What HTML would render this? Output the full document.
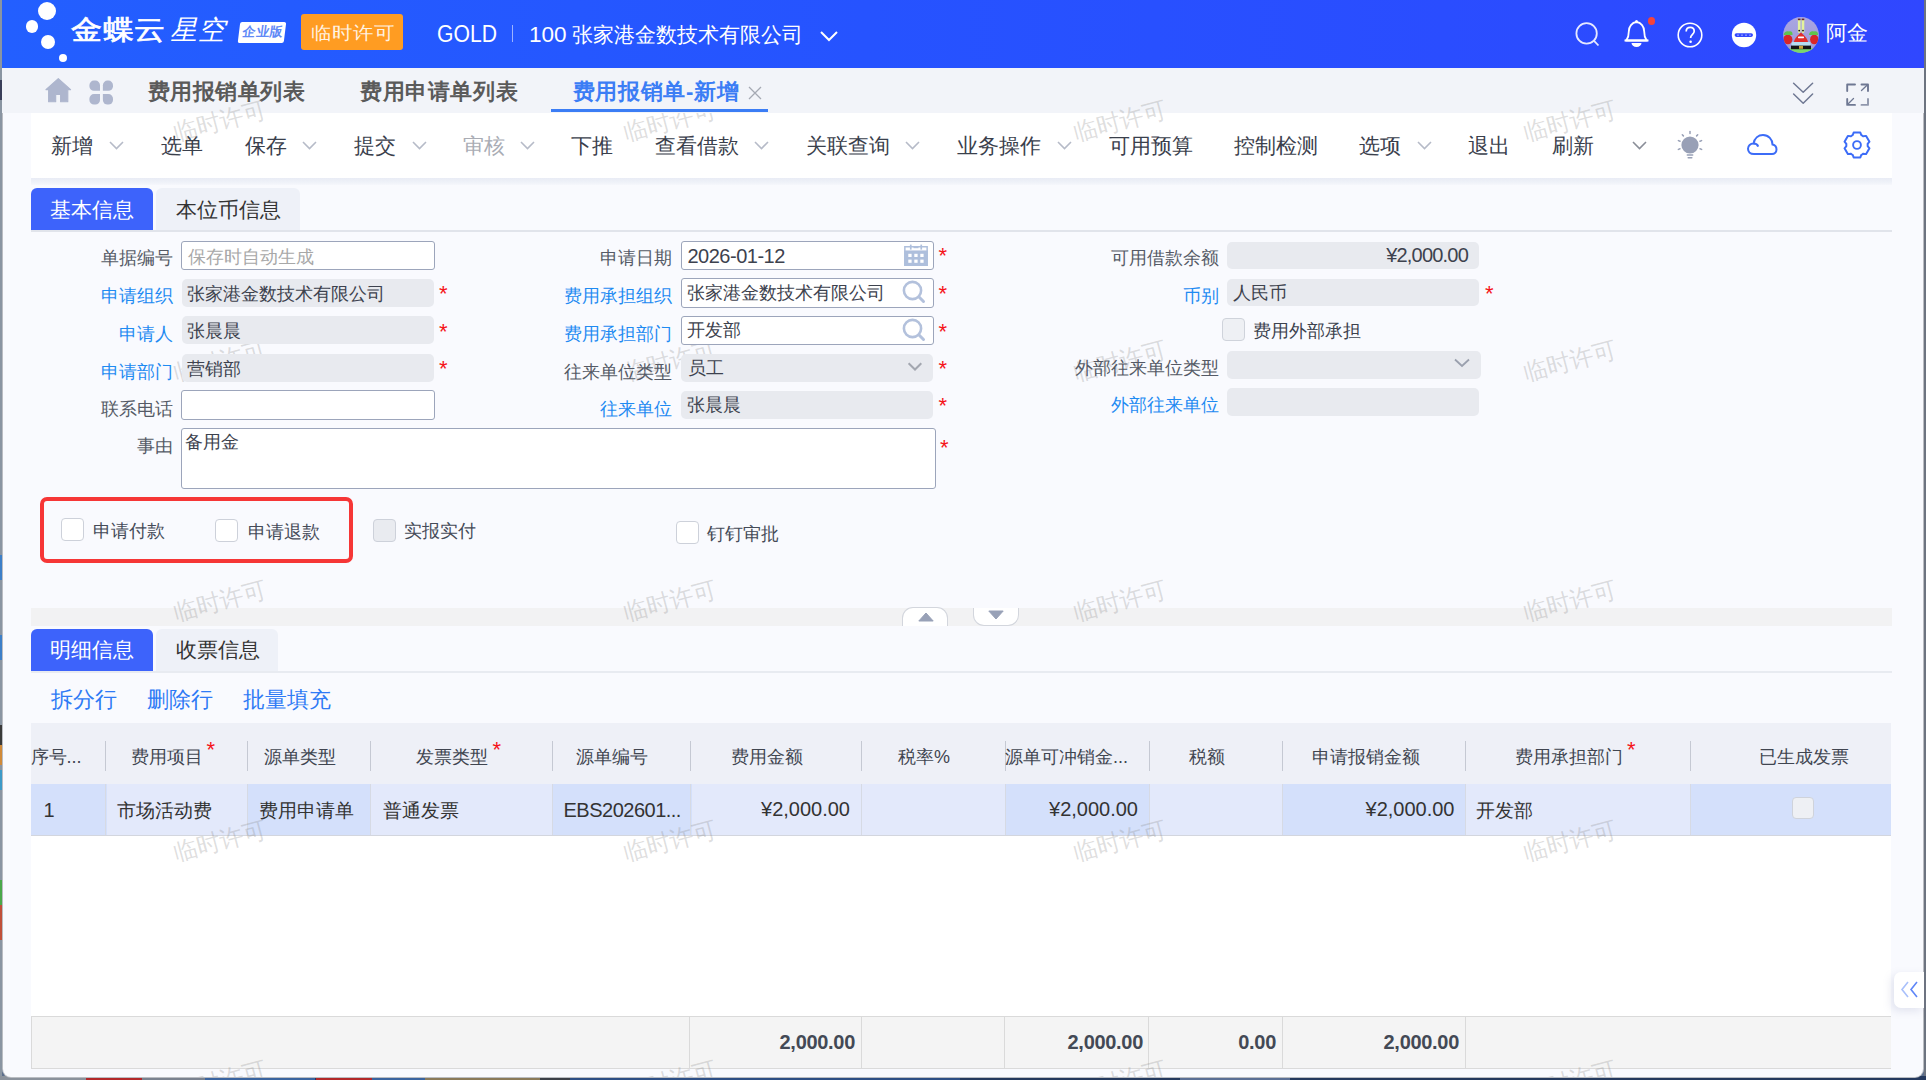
<!DOCTYPE html>
<html><head><meta charset="utf-8"><title>费用报销单-新增</title>
<style>
html,body{margin:0;padding:0;}
body{width:1926px;height:1080px;overflow:hidden;position:relative;background:#5b6e8c;font-family:"Liberation Sans", sans-serif;}
.t{position:absolute;white-space:nowrap;}
.r{position:absolute;box-sizing:border-box;}
</style></head><body>

<div class="r" style="left:0.0px;top:0.0px;width:2.0px;height:1080.0px;background:#8a95a2;"></div>
<div class="r" style="left:0.0px;top:80.0px;width:2.0px;height:20.0px;background:#3a3f5a;"></div>
<div class="r" style="left:0.0px;top:555.0px;width:2.0px;height:25.0px;background:#3d7fc8;"></div>
<div class="r" style="left:0.0px;top:635.0px;width:2.0px;height:25.0px;background:#3d7fc8;"></div>
<div class="r" style="left:0.0px;top:725.0px;width:2.0px;height:20.0px;background:#3a3a3a;"></div>
<div class="r" style="left:0.0px;top:745.0px;width:2.0px;height:20.0px;background:#d08a3a;"></div>
<div class="r" style="left:0.0px;top:770.0px;width:2.0px;height:20.0px;background:#3d9ac8;"></div>
<div class="r" style="left:0.0px;top:880.0px;width:2.0px;height:25.0px;background:#4aa84a;"></div>
<div class="r" style="left:0.0px;top:905.0px;width:2.0px;height:35.0px;background:#c0503a;"></div>
<div class="r" style="left:1924.0px;top:0.0px;width:2.0px;height:1080.0px;background:#6d7480;"></div>
<div class="r" style="left:0.0px;top:1076.0px;width:1926.0px;height:4.0px;background:#24395e;"></div>
<div class="r" style="left:0.0px;top:1076.0px;width:86.0px;height:4.0px;background:#8b929c;"></div>
<div class="r" style="left:86.0px;top:1076.0px;width:56.0px;height:4.0px;background:#b3282b;"></div>
<div class="r" style="left:142.0px;top:1076.0px;width:63.0px;height:4.0px;background:#7a8290;"></div>
<div class="r" style="left:205.0px;top:1076.0px;width:110.0px;height:4.0px;background:#3a64a0;"></div>
<div class="r" style="left:316.0px;top:1076.0px;width:56.0px;height:4.0px;background:#b3282b;"></div>
<div class="r" style="left:372.0px;top:1076.0px;width:53.0px;height:4.0px;background:#3a64a0;"></div>
<div class="r" style="left:425.0px;top:1076.0px;width:115.0px;height:4.0px;background:#8a7a5a;"></div>
<div class="r" style="left:540.0px;top:1076.0px;width:30.0px;height:4.0px;background:#3b3f48;"></div>
<div class="r" style="left:570.0px;top:1076.0px;width:390.0px;height:4.0px;background:#2d4f86;"></div>
<div class="r" style="left:1180.0px;top:1076.0px;width:110.0px;height:4.0px;background:#5a6f96;"></div>
<div class="r" style="left:2.0px;top:0.0px;width:1922.0px;height:1078.0px;background:#f9fafe;border-radius:0 0 9px 9px;border:1px solid rgba(70,75,85,0.35);border-top:none;"></div>
<div class="r" style="left:2.0px;top:0.0px;width:1922.0px;height:68.0px;background:linear-gradient(90deg,#235fff 0%,#2653ff 45%,#2a4dff 75%,#3047ff 100%);"></div>
<div class="r" style="left:38.1px;top:1.7px;width:18.4px;height:18.4px;background:#fff;border-radius:50%;"></div>
<div class="r" style="left:25.9px;top:20.4px;width:12.2px;height:12.2px;background:#fff;border-radius:50%;"></div>
<div class="r" style="left:40.6px;top:35.2px;width:14.0px;height:14.0px;background:#fff;border-radius:50%;"></div>
<div class="r" style="left:59.1px;top:53.7px;width:8.2px;height:8.2px;background:#fff;border-radius:50%;"></div>
<div class="t" style="left:70.5px;top:17.0px;font-size:27px;line-height:27px;color:#fff;font-weight:normal;letter-spacing:0.5px;transform:scaleX(1.15);transform-origin:0 0;-webkit-text-stroke:0.7px #fff;">金蝶云</div>
<div class="t" style="left:170.0px;top:17.0px;font-size:27px;line-height:27px;color:#fff;font-weight:normal;font-style:italic;letter-spacing:1px;">星空</div>
<div class="r" style="left:238.5px;top:21.5px;width:46px;height:20.5px;background:#fff;transform:skewX(-7deg);border-radius:2px;"></div>
<div class="t" style="left:241.5px;top:25.3px;font-size:13px;line-height:13px;color:#5f89f6;font-weight:bold;transform:skewX(-8deg);transform-origin:0 100%;letter-spacing:0.3px;">企业版</div>
<div class="r" style="left:301.0px;top:14.0px;width:102.0px;height:36.0px;background:#ff9c22;border-radius:3px;"></div>
<div class="t" style="left:310.5px;top:23.5px;font-size:20.5px;line-height:20.5px;color:rgba(255,255,255,0.88);font-weight:normal;transform:scaleY(0.88);transform-origin:0 0;">临时许可</div>
<div class="t" style="left:437.0px;top:23.0px;font-size:23.5px;line-height:23.5px;color:#fff;font-weight:normal;transform:scaleX(0.9);transform-origin:0 0;">GOLD</div>
<div class="r" style="left:512.0px;top:25.0px;width:1.3px;height:17.0px;background:rgba(255,255,255,0.55);"></div>
<div class="t" style="left:529.0px;top:23.5px;font-size:21px;line-height:21px;color:#fff;font-weight:normal;"><span style="font-size:22.5px">100</span> 张家港金数技术有限公司</div>
<svg class="r" style="left:819px;top:29px" width="20" height="14" viewBox="0 0 20 14"><polyline points="2,3 10,11 18,3" fill="none" stroke="#fff" stroke-width="2"/></svg>
<svg class="r" style="left:1572px;top:20px" width="30" height="30" viewBox="0 0 30 30"><circle cx="14.6" cy="13.4" r="10.2" fill="none" stroke="#e6e9ff" stroke-width="1.8"/><line x1="21.8" y1="20.6" x2="26.5" y2="25.5" stroke="#e6e9ff" stroke-width="1.8"/></svg>
<svg class="r" style="left:1622px;top:18px" width="30" height="32" viewBox="0 0 30 32"><path d="M4,22.5 L4.5,22 C6,20 6.8,18 6.8,13.5 C6.8,8.5 10,4.5 14.5,4 C19,4.5 22.2,8.5 22.2,13.5 C22.2,18 23,20 24.5,22 L25,22.5 Z" fill="none" stroke="#fff" stroke-width="1.8" stroke-linejoin="round"/><line x1="2.5" y1="22.5" x2="26.5" y2="22.5" stroke="#fff" stroke-width="2"/><path d="M9.5,25 A5,4 0 0 0 19.5,25 Z" fill="#fff"/><circle cx="14.5" cy="3.5" r="1.5" fill="#fff"/></svg>
<div class="r" style="left:1647.7px;top:17.3px;width:7.4px;height:7.4px;background:#f5433c;border-radius:50%;"></div>
<svg class="r" style="left:1676px;top:21px" width="28" height="28" viewBox="0 0 28 28"><circle cx="14" cy="14" r="11.8" fill="none" stroke="#fff" stroke-width="1.6"/><path d="M10.2,10.6 C10.2,8 12,6.4 14.2,6.4 C16.6,6.4 18.2,8 18.2,10.2 C18.2,13.2 14.6,13.6 14.6,17" fill="none" stroke="#fff" stroke-width="1.7"/><circle cx="14.6" cy="20.8" r="1.3" fill="#fff"/></svg>
<svg class="r" style="left:1730px;top:21px" width="28" height="28" viewBox="0 0 28 28"><circle cx="14" cy="14" r="12.2" fill="#fff"/><rect x="4.6" y="12.3" width="18.4" height="3.6" rx="1.8" fill="#3348ff"/><circle cx="8" cy="14.1" r="0.7" fill="#fff"/><circle cx="12" cy="14.1" r="0.7" fill="#fff"/><circle cx="16" cy="14.1" r="0.7" fill="#fff"/><circle cx="20" cy="14.1" r="0.7" fill="#fff"/></svg>
<svg class="r" style="left:1783px;top:17px" width="36" height="36" viewBox="0 0 36 36"><defs><clipPath id="av"><circle cx="18" cy="18" r="17.9"/></clipPath><linearGradient id="avg" x1="0" y1="0" x2="0" y2="1"><stop offset="0" stop-color="#a9a6e2"/><stop offset="1" stop-color="#9d98d8"/></linearGradient></defs>
<g clip-path="url(#av)"><rect width="36" height="36" fill="url(#avg)"/>
<rect x="0" y="31" width="36" height="6" fill="#79d66a"/>
<rect x="8.5" y="25" width="19" height="4" rx="1" fill="#b4ddf2"/>
<rect x="8" y="28.6" width="20" height="3.6" fill="#151515"/><rect x="16" y="28.8" width="4" height="3" fill="#c9a23a"/>
<path d="M18,15.5 C20,17.5 24.5,21 25,25 L11,25 C11.5,21 16,17.5 18,15.5 Z" fill="#e12d2a"/>
<rect x="14.9" y="2" width="2.6" height="14" rx="1.2" fill="#e4f39c"/><rect x="18.7" y="2" width="2.6" height="14" rx="1.2" fill="#e4f39c"/>
<rect x="14.9" y="1.6" width="2.6" height="1.6" fill="#6a2a2a"/><rect x="18.7" y="1.6" width="2.6" height="1.6" fill="#6a2a2a"/>
<circle cx="16.2" cy="13.6" r="0.9" fill="#111"/><circle cx="20" cy="13.6" r="0.9" fill="#111"/>
<ellipse cx="4.8" cy="22.5" rx="4.6" ry="4.8" fill="#d8262a"/><ellipse cx="31.3" cy="22.5" rx="4.2" ry="4.8" fill="#d8262a"/>
<path d="M0.5,18 C1,14.5 4,13.5 6,14.5 C8,13.5 10,15 9.5,18 Z" fill="#5fc44f"/><path d="M26,18 C26,14.5 29,13.5 31,14.5 C33,13.5 35.5,15 35,18 Z" fill="#5fc44f"/>
<rect x="15" y="19.6" width="6" height="1.6" rx="0.6" fill="#fff"/></g></svg>
<div class="t" style="left:1825.5px;top:22.5px;font-size:20.5px;line-height:20.5px;color:#fff;font-weight:normal;">阿金</div>
<div class="r" style="left:2.0px;top:68.0px;width:1922.0px;height:44.5px;background:#f2f4f9;"></div>
<svg class="r" style="left:40px;top:74px" width="80" height="34" viewBox="0 0 80 34"><path d="M18.3,4.6 L30.6,15.6 L27.8,15.6 L27.8,27.8 L20.6,27.8 L20.6,20.5 L15.7,20.5 L15.7,27.8 L8.6,27.8 L8.6,15.6 L5.9,15.6 Z" fill="#aeb6ce" stroke="#aeb6ce" stroke-width="1.1" stroke-linejoin="round"/><path d="M49.4,11.2 A4.6,4.6 0 0 1 54.0,6.6 H55.4 A4.6,4.6 0 0 1 60,11.2 V16.8 H54.0 A4.6,4.6 0 0 1 49.4,12.200000000000001 Z" fill="#aeb6ce"/><path d="M62.9,11.2 A4.6,4.6 0 0 1 67.5,6.6 H68.4 A4.6,4.6 0 0 1 73,11.2 V12.200000000000001 A4.6,4.6 0 0 1 68.4,16.8 H62.9 Z" fill="#aeb6ce"/><path d="M49.4,24.700000000000003 A4.6,4.6 0 0 1 54.0,20.1 H60 V25.9 A4.6,4.6 0 0 1 55.4,30.5 H54.0 A4.6,4.6 0 0 1 49.4,25.9 Z" fill="#aeb6ce"/><path d="M62.9,20.1 H68.4 A4.6,4.6 0 0 1 73,24.700000000000003 V25.9 A4.6,4.6 0 0 1 68.4,30.5 H67.5 A4.6,4.6 0 0 1 62.9,25.9 Z" fill="#aeb6ce"/></svg>
<div class="t" style="left:147.5px;top:81.0px;font-size:22px;line-height:22px;color:#5a5a5a;font-weight:bold;letter-spacing:0.6px;">费用报销单列表</div>
<div class="t" style="left:360.0px;top:81.0px;font-size:22px;line-height:22px;color:#5a5a5a;font-weight:bold;letter-spacing:0.6px;">费用申请单列表</div>
<svg class="r" style="left:1785px;top:75px" width="95" height="37" viewBox="0 0 95 37"><g fill="none" stroke="#6f7893" stroke-width="1.5" stroke-linecap="round" stroke-linejoin="round"><polyline points="8.6,8.3 18.2,17.2 27.6,8.3"/><polyline points="8.6,19 18.2,28.3 27.6,19"/></g><g fill="none" stroke="#6f7893" stroke-width="1.9" stroke-linejoin="round" stroke-linecap="round"><polyline points="62.2,16 62.2,9.5 70,9.5"/><polyline points="76.5,9.5 83,9.5 83,16"/><polyline points="62.2,24 62.2,29.9 70,29.9"/><polyline points="76.5,29.9 83,29.9 83,24" stroke-opacity="0.75"/></g><g stroke="#6f7893" stroke-width="1.3" stroke-linecap="round"><line x1="76.5" y1="15.5" x2="82" y2="10.3"/><line x1="68.5" y1="23.5" x2="63" y2="29"/></g></svg>
<div class="r" style="left:31.0px;top:177.0px;width:1860.5px;height:8.0px;background:linear-gradient(#e7eaf4,#eef1f8 60%,#f6f7fc);"></div>
<div class="r" style="left:31.0px;top:112.5px;width:1860.5px;height:65.0px;background:#fff;"></div>
<div class="t" style="left:51.0px;top:134.5px;font-size:21px;line-height:21px;color:#3a404c;font-weight:normal;">新增</div>
<svg class="r" style="left:108px;top:139px" width="17" height="13" viewBox="0 0 17 13"><polyline points="2,3 8.5,9.5 15,3" fill="none" stroke="#b6bbc8" stroke-width="1.6"/></svg>
<div class="t" style="left:160.5px;top:134.5px;font-size:21px;line-height:21px;color:#3a404c;font-weight:normal;">选单</div>
<div class="t" style="left:244.5px;top:134.5px;font-size:21px;line-height:21px;color:#3a404c;font-weight:normal;">保存</div>
<svg class="r" style="left:301px;top:139px" width="17" height="13" viewBox="0 0 17 13"><polyline points="2,3 8.5,9.5 15,3" fill="none" stroke="#b6bbc8" stroke-width="1.6"/></svg>
<div class="t" style="left:353.5px;top:134.5px;font-size:21px;line-height:21px;color:#3a404c;font-weight:normal;">提交</div>
<svg class="r" style="left:411px;top:139px" width="17" height="13" viewBox="0 0 17 13"><polyline points="2,3 8.5,9.5 15,3" fill="none" stroke="#b6bbc8" stroke-width="1.6"/></svg>
<div class="t" style="left:462.5px;top:134.5px;font-size:21px;line-height:21px;color:#a9acb4;font-weight:normal;">审核</div>
<svg class="r" style="left:519px;top:139px" width="17" height="13" viewBox="0 0 17 13"><polyline points="2,3 8.5,9.5 15,3" fill="none" stroke="#b6bbc8" stroke-width="1.6"/></svg>
<div class="t" style="left:571.1px;top:134.5px;font-size:21px;line-height:21px;color:#3a404c;font-weight:normal;">下推</div>
<div class="t" style="left:654.5px;top:134.5px;font-size:21px;line-height:21px;color:#3a404c;font-weight:normal;">查看借款</div>
<svg class="r" style="left:753px;top:139px" width="17" height="13" viewBox="0 0 17 13"><polyline points="2,3 8.5,9.5 15,3" fill="none" stroke="#b6bbc8" stroke-width="1.6"/></svg>
<div class="t" style="left:806.3px;top:134.5px;font-size:21px;line-height:21px;color:#3a404c;font-weight:normal;">关联查询</div>
<svg class="r" style="left:904px;top:139px" width="17" height="13" viewBox="0 0 17 13"><polyline points="2,3 8.5,9.5 15,3" fill="none" stroke="#b6bbc8" stroke-width="1.6"/></svg>
<div class="t" style="left:956.5px;top:134.5px;font-size:21px;line-height:21px;color:#3a404c;font-weight:normal;">业务操作</div>
<svg class="r" style="left:1056px;top:139px" width="17" height="13" viewBox="0 0 17 13"><polyline points="2,3 8.5,9.5 15,3" fill="none" stroke="#b6bbc8" stroke-width="1.6"/></svg>
<div class="t" style="left:1108.5px;top:134.5px;font-size:21px;line-height:21px;color:#3a404c;font-weight:normal;">可用预算</div>
<div class="t" style="left:1233.5px;top:134.5px;font-size:21px;line-height:21px;color:#3a404c;font-weight:normal;">控制检测</div>
<div class="t" style="left:1359.1px;top:134.5px;font-size:21px;line-height:21px;color:#3a404c;font-weight:normal;">选项</div>
<svg class="r" style="left:1416px;top:139px" width="17" height="13" viewBox="0 0 17 13"><polyline points="2,3 8.5,9.5 15,3" fill="none" stroke="#b6bbc8" stroke-width="1.6"/></svg>
<div class="t" style="left:1468.0px;top:134.5px;font-size:21px;line-height:21px;color:#3a404c;font-weight:normal;">退出</div>
<div class="t" style="left:1551.5px;top:134.5px;font-size:21px;line-height:21px;color:#3a404c;font-weight:normal;">刷新</div>
<svg class="r" style="left:1631px;top:139px" width="17" height="13" viewBox="0 0 17 13"><polyline points="2,3 8.5,9.5 15,3" fill="none" stroke="#8a8e98" stroke-width="1.6"/></svg>
<svg class="r" style="left:1675px;top:128px" width="32" height="33" viewBox="0 0 32 33"><circle cx="15" cy="17" r="8.6" fill="#98a0b6"/><g stroke="#98a0b6" stroke-width="1.5" stroke-linecap="round"><line x1="15" y1="3.6" x2="15" y2="5.4"/><line x1="7.3" y1="6.8" x2="8.4" y2="7.9"/><line x1="22.7" y1="6.8" x2="21.6" y2="7.9"/><line x1="3.4" y1="12.6" x2="5" y2="13.2"/><line x1="26.6" y1="12.6" x2="25" y2="13.2"/><line x1="3.4" y1="21.4" x2="5" y2="20.8"/><line x1="26.6" y1="21.4" x2="25" y2="20.8"/><line x1="12.3" y1="27" x2="17.7" y2="27"/><line x1="13.2" y1="29.8" x2="16.8" y2="29.8"/></g></svg>
<svg class="r" style="left:1745px;top:131px" width="34" height="27" viewBox="0 0 34 27"><path d="M9,23 C5,23 3,20.5 3,17.8 C3,14.8 5.5,12.5 8.5,12.6 C9.5,7 13.5,4 18,4 C23.5,4 27.5,8.5 27.5,13.5 C30,14 31.5,16.3 31.5,18.6 C31.5,21 29.5,23 27,23 Z" fill="none" stroke="#3c6cf7" stroke-width="2"/><path d="M8.5,12.6 C11,12.6 12.7,14 13.2,15.6" fill="none" stroke="#3c6cf7" stroke-width="2"/></svg>
<svg class="r" style="left:1842px;top:130px" width="30" height="30" viewBox="0 0 30 30"><polygon points="9.65,5.73 10.65,5.23 11.66,2.54 18.34,2.54 19.35,5.23 20.35,5.73 21.29,6.34 24.12,5.88 27.46,11.66 25.64,13.88 25.70,15.00 25.64,16.12 27.46,18.34 24.12,24.12 21.29,23.66 20.35,24.27 19.35,24.77 18.34,27.46 11.66,27.46 10.65,24.77 9.65,24.27 8.71,23.66 5.88,24.12 2.54,18.34 4.36,16.12 4.30,15.00 4.36,13.88 2.54,11.66 5.88,5.88 8.71,6.34" fill="none" stroke="#3c6cf7" stroke-width="2" stroke-linejoin="round"/><circle cx="15" cy="15" r="3.9" fill="none" stroke="#3c6cf7" stroke-width="1.9"/></svg>
<div class="r" style="left:31.0px;top:188.0px;width:122.0px;height:42.5px;background:#3d63fb;border-radius:6px 6px 0 0;"></div>
<div class="t" style="left:50.0px;top:199.0px;font-size:21px;line-height:21px;color:#fff;font-weight:normal;">基本信息</div>
<div class="r" style="left:156.0px;top:188.0px;width:144.0px;height:42.5px;background:#eef1f8;border-radius:6px 6px 0 0;"></div>
<div class="t" style="left:176.0px;top:199.0px;font-size:21px;line-height:21px;color:#333;font-weight:normal;">本位币信息</div>
<div class="r" style="left:31.0px;top:230.0px;width:1860.5px;height:1.5px;background:#e1e4eb;"></div>
<div class="r" style="left:31.0px;top:608.0px;width:1860.5px;height:17.5px;background:#f2f2f3;"></div>
<div class="r" style="left:902.4px;top:607.0px;width:46.1px;height:19.0px;background:#fff;border:1px solid #d3d6dd;border-bottom:none;border-radius:11px 11px 0 0;"></div>
<svg class="r" style="left:917px;top:611px" width="18" height="12" viewBox="0 0 18 12"><path d="M1.8,10 L9,2 L16.2,10 Z" fill="#98a1b7" stroke="#98a1b7" stroke-width="1" stroke-linejoin="round"/></svg>
<div class="r" style="left:973.4px;top:607.5px;width:45.3px;height:18.0px;background:#fff;border:1px solid #d3d6dd;border-top:none;border-radius:0 0 11px 11px;"></div>
<svg class="r" style="left:987px;top:609px" width="18" height="12" viewBox="0 0 18 12"><path d="M1.8,2 L9,10 L16.2,2 Z" fill="#98a1b7" stroke="#98a1b7" stroke-width="1" stroke-linejoin="round"/></svg>
<div class="r" style="left:31.0px;top:628.7px;width:122.0px;height:42.8px;background:#3d63fb;border-radius:6px 6px 0 0;"></div>
<div class="t" style="left:50.0px;top:639.0px;font-size:21px;line-height:21px;color:#fff;font-weight:normal;">明细信息</div>
<div class="r" style="left:156.0px;top:628.7px;width:122.0px;height:42.8px;background:#eef1f8;border-radius:6px 6px 0 0;"></div>
<div class="t" style="left:175.7px;top:639.0px;font-size:21px;line-height:21px;color:#333;font-weight:normal;">收票信息</div>
<div class="r" style="left:31.0px;top:671.0px;width:1860.5px;height:1.5px;background:#e8ebf1;"></div>
<div class="t" style="left:51.0px;top:688.5px;font-size:22.2px;line-height:22.2px;color:#2f7bf5;font-weight:normal;">拆分行</div>
<div class="t" style="left:146.6px;top:688.5px;font-size:22.2px;line-height:22.2px;color:#2f7bf5;font-weight:normal;">删除行</div>
<div class="t" style="left:243.0px;top:688.5px;font-size:22.2px;line-height:22.2px;color:#2f7bf5;font-weight:normal;">批量填充</div>
<div class="r" style="left:31.0px;top:723.0px;width:1860.0px;height:61.0px;background:#eef0f7;"></div>
<div class="r" style="left:31.0px;top:784.0px;width:1860.0px;height:232.5px;background:#fff;"></div>
<div class="r" style="left:31.0px;top:784.0px;width:75.5px;height:51.5px;background:#d4e0fb;"></div>
<div class="r" style="left:106.5px;top:784.0px;width:141.5px;height:51.5px;background:#e3e9fb;"></div>
<div class="r" style="left:248.0px;top:784.0px;width:123.3px;height:51.5px;background:#d4e0fb;"></div>
<div class="r" style="left:371.3px;top:784.0px;width:181.7px;height:51.5px;background:#e3e9fb;"></div>
<div class="r" style="left:553.0px;top:784.0px;width:138.5px;height:51.5px;background:#d4e0fb;"></div>
<div class="r" style="left:691.5px;top:784.0px;width:170.8px;height:51.5px;background:#e3e9fb;"></div>
<div class="r" style="left:862.3px;top:784.0px;width:143.9px;height:51.5px;background:#e3e9fb;"></div>
<div class="r" style="left:1006.2px;top:784.0px;width:144.2px;height:51.5px;background:#d4e0fb;"></div>
<div class="r" style="left:1150.4px;top:784.0px;width:132.6px;height:51.5px;background:#e3e9fb;"></div>
<div class="r" style="left:1283.0px;top:784.0px;width:183.2px;height:51.5px;background:#d4e0fb;"></div>
<div class="r" style="left:1466.2px;top:784.0px;width:224.8px;height:51.5px;background:#e3e9fb;"></div>
<div class="r" style="left:1691.0px;top:784.0px;width:200.0px;height:51.5px;background:#d4e0fb;"></div>
<div class="r" style="left:31.0px;top:835.0px;width:1860.0px;height:1.2px;background:#d3d6de;"></div>
<div class="r" style="left:105.0px;top:784.0px;width:1.1px;height:51.0px;background:#d6dae4;"></div>
<div class="r" style="left:246.5px;top:784.0px;width:1.1px;height:51.0px;background:#d6dae4;"></div>
<div class="r" style="left:369.8px;top:784.0px;width:1.1px;height:51.0px;background:#d6dae4;"></div>
<div class="r" style="left:551.5px;top:784.0px;width:1.1px;height:51.0px;background:#d6dae4;"></div>
<div class="r" style="left:690.0px;top:784.0px;width:1.1px;height:51.0px;background:#d6dae4;"></div>
<div class="r" style="left:860.8px;top:784.0px;width:1.1px;height:51.0px;background:#d6dae4;"></div>
<div class="r" style="left:1004.7px;top:784.0px;width:1.1px;height:51.0px;background:#d6dae4;"></div>
<div class="r" style="left:1148.9px;top:784.0px;width:1.1px;height:51.0px;background:#d6dae4;"></div>
<div class="r" style="left:1281.5px;top:784.0px;width:1.1px;height:51.0px;background:#d6dae4;"></div>
<div class="r" style="left:1464.7px;top:784.0px;width:1.1px;height:51.0px;background:#d6dae4;"></div>
<div class="r" style="left:1689.5px;top:784.0px;width:1.1px;height:51.0px;background:#d6dae4;"></div>
<div class="r" style="left:105.0px;top:741.0px;width:1.3px;height:29.5px;background:#c5c9d3;"></div>
<div class="r" style="left:246.5px;top:741.0px;width:1.3px;height:29.5px;background:#c5c9d3;"></div>
<div class="r" style="left:369.8px;top:741.0px;width:1.3px;height:29.5px;background:#c5c9d3;"></div>
<div class="r" style="left:551.5px;top:741.0px;width:1.3px;height:29.5px;background:#c5c9d3;"></div>
<div class="r" style="left:690.0px;top:741.0px;width:1.3px;height:29.5px;background:#c5c9d3;"></div>
<div class="r" style="left:860.8px;top:741.0px;width:1.3px;height:29.5px;background:#c5c9d3;"></div>
<div class="r" style="left:1004.7px;top:741.0px;width:1.3px;height:29.5px;background:#c5c9d3;"></div>
<div class="r" style="left:1148.9px;top:741.0px;width:1.3px;height:29.5px;background:#c5c9d3;"></div>
<div class="r" style="left:1281.5px;top:741.0px;width:1.3px;height:29.5px;background:#c5c9d3;"></div>
<div class="r" style="left:1464.7px;top:741.0px;width:1.3px;height:29.5px;background:#c5c9d3;"></div>
<div class="r" style="left:1689.5px;top:741.0px;width:1.3px;height:29.5px;background:#c5c9d3;"></div>
<div class="t" style="left:30.5px;top:747.5px;font-size:18px;line-height:18px;color:#404550;font-weight:normal;">序号...</div>
<div class="t" style="left:131.0px;top:747.5px;font-size:18px;line-height:18px;color:#404550;font-weight:normal;">费用项目</div>
<div class="t" style="left:206.5px;top:739.0px;font-size:22px;line-height:22px;color:#f5141a;font-weight:normal;">*</div>
<div class="t" style="left:263.7px;top:747.5px;font-size:18px;line-height:18px;color:#404550;font-weight:normal;">源单类型</div>
<div class="t" style="left:416.0px;top:747.5px;font-size:18px;line-height:18px;color:#404550;font-weight:normal;">发票类型</div>
<div class="t" style="left:492.5px;top:739.0px;font-size:22px;line-height:22px;color:#f5141a;font-weight:normal;">*</div>
<div class="t" style="left:576.0px;top:747.5px;font-size:18px;line-height:18px;color:#404550;font-weight:normal;">源单编号</div>
<div class="t" style="left:730.5px;top:747.5px;font-size:18px;line-height:18px;color:#404550;font-weight:normal;">费用金额</div>
<div class="t" style="left:898.0px;top:747.5px;font-size:18px;line-height:18px;color:#404550;font-weight:normal;">税率%</div>
<div class="t" style="left:1005.0px;top:747.5px;font-size:18px;line-height:18px;color:#404550;font-weight:normal;">源单可冲销金...</div>
<div class="t" style="left:1188.7px;top:747.5px;font-size:18px;line-height:18px;color:#404550;font-weight:normal;">税额</div>
<div class="t" style="left:1312.0px;top:747.5px;font-size:18px;line-height:18px;color:#404550;font-weight:normal;">申请报销金额</div>
<div class="t" style="left:1515.0px;top:747.5px;font-size:18px;line-height:18px;color:#404550;font-weight:normal;">费用承担部门</div>
<div class="t" style="left:1627.0px;top:739.0px;font-size:22px;line-height:22px;color:#f5141a;font-weight:normal;">*</div>
<div class="t" style="left:1759.0px;top:747.5px;font-size:18px;line-height:18px;color:#404550;font-weight:normal;">已生成发票</div>
<div class="t" style="left:43.5px;top:799.5px;font-size:20px;line-height:20px;color:#333;font-weight:normal;">1</div>
<div class="t" style="left:117.0px;top:800.5px;font-size:19.3px;line-height:19.3px;color:#333;font-weight:normal;">市场活动费</div>
<div class="t" style="left:259.0px;top:800.5px;font-size:19.3px;line-height:19.3px;color:#333;font-weight:normal;">费用申请单</div>
<div class="t" style="left:382.6px;top:800.5px;font-size:19.3px;line-height:19.3px;color:#333;font-weight:normal;">普通发票</div>
<div class="t" style="left:563.5px;top:799.5px;font-size:20px;line-height:20px;color:#333;font-weight:normal;letter-spacing:-0.5px;">EBS202601...</div>
<div class="t" style="right:1076.0px;text-align:right;top:798.5px;font-size:20px;line-height:20px;color:#333;font-weight:normal;">¥2,000.00</div>
<div class="t" style="right:788.0px;text-align:right;top:798.5px;font-size:20px;line-height:20px;color:#333;font-weight:normal;">¥2,000.00</div>
<div class="t" style="right:471.5px;text-align:right;top:798.5px;font-size:20px;line-height:20px;color:#333;font-weight:normal;">¥2,000.00</div>
<div class="t" style="left:1476.3px;top:800.5px;font-size:19.3px;line-height:19.3px;color:#333;font-weight:normal;">开发部</div>
<div class="r" style="left:1791.5px;top:796.5px;width:22.5px;height:22.5px;background:#eef0f4;border:1px solid #cfd3db;border-radius:4px;"></div>
<div class="r" style="left:31.0px;top:1016.0px;width:1860.0px;height:53.0px;background:#f4f4f4;border:1.5px solid #dadada;border-right:none;"></div>
<div class="r" style="left:689.0px;top:1016.0px;width:1.3px;height:53.0px;background:#dadada;"></div>
<div class="r" style="left:860.9px;top:1016.0px;width:1.3px;height:53.0px;background:#dadada;"></div>
<div class="r" style="left:1003.5px;top:1016.0px;width:1.3px;height:53.0px;background:#dadada;"></div>
<div class="r" style="left:1148.1px;top:1016.0px;width:1.3px;height:53.0px;background:#dadada;"></div>
<div class="r" style="left:1282.0px;top:1016.0px;width:1.3px;height:53.0px;background:#dadada;"></div>
<div class="r" style="left:1465.0px;top:1016.0px;width:1.3px;height:53.0px;background:#dadada;"></div>
<div class="t" style="right:1071.0px;text-align:right;top:1031.5px;font-size:20px;line-height:20px;color:#434955;font-weight:bold;letter-spacing:-0.3px;">2,000.00</div>
<div class="t" style="right:783.0px;text-align:right;top:1031.5px;font-size:20px;line-height:20px;color:#434955;font-weight:bold;letter-spacing:-0.3px;">2,000.00</div>
<div class="t" style="right:650.0px;text-align:right;top:1031.5px;font-size:20px;line-height:20px;color:#434955;font-weight:bold;letter-spacing:-0.3px;">0.00</div>
<div class="t" style="right:467.0px;text-align:right;top:1031.5px;font-size:20px;line-height:20px;color:#434955;font-weight:bold;letter-spacing:-0.3px;">2,000.00</div>
<div class="r" style="left:1894.0px;top:972.0px;width:30.0px;height:36.0px;background:#fff;border-radius:7px 0 0 7px;box-shadow:-3px 3px 8px rgba(120,130,170,0.18);"></div>
<svg class="r" style="left:1899px;top:980px" width="22" height="20" viewBox="0 0 22 20"><polyline points="9,2 3,9.5 9,17" fill="none" stroke="#a9c0fb" stroke-width="1.6"/><polyline points="18,2 12,9.5 18,17" fill="none" stroke="#5f86f8" stroke-width="1.6"/></svg>
<div class="r" style="left:2px;top:68px;width:1922px;height:1009px;overflow:hidden;">
<div class="t" style="left:169.5px;top:38.5px;font-size:24px;line-height:28px;color:rgba(128,128,128,0.26);transform:rotate(-15deg);">临时许可</div>
<div class="t" style="left:619.5px;top:38.5px;font-size:24px;line-height:28px;color:rgba(128,128,128,0.26);transform:rotate(-15deg);">临时许可</div>
<div class="t" style="left:1069.5px;top:38.5px;font-size:24px;line-height:28px;color:rgba(128,128,128,0.26);transform:rotate(-15deg);">临时许可</div>
<div class="t" style="left:1519.5px;top:38.5px;font-size:24px;line-height:28px;color:rgba(128,128,128,0.26);transform:rotate(-15deg);">临时许可</div>
<div class="t" style="left:169.5px;top:278.5px;font-size:24px;line-height:28px;color:rgba(128,128,128,0.26);transform:rotate(-15deg);">临时许可</div>
<div class="t" style="left:619.5px;top:278.5px;font-size:24px;line-height:28px;color:rgba(128,128,128,0.26);transform:rotate(-15deg);">临时许可</div>
<div class="t" style="left:1069.5px;top:278.5px;font-size:24px;line-height:28px;color:rgba(128,128,128,0.26);transform:rotate(-15deg);">临时许可</div>
<div class="t" style="left:1519.5px;top:278.5px;font-size:24px;line-height:28px;color:rgba(128,128,128,0.26);transform:rotate(-15deg);">临时许可</div>
<div class="t" style="left:169.5px;top:518.5px;font-size:24px;line-height:28px;color:rgba(128,128,128,0.26);transform:rotate(-15deg);">临时许可</div>
<div class="t" style="left:619.5px;top:518.5px;font-size:24px;line-height:28px;color:rgba(128,128,128,0.26);transform:rotate(-15deg);">临时许可</div>
<div class="t" style="left:1069.5px;top:518.5px;font-size:24px;line-height:28px;color:rgba(128,128,128,0.26);transform:rotate(-15deg);">临时许可</div>
<div class="t" style="left:1519.5px;top:518.5px;font-size:24px;line-height:28px;color:rgba(128,128,128,0.26);transform:rotate(-15deg);">临时许可</div>
<div class="t" style="left:169.5px;top:758.5px;font-size:24px;line-height:28px;color:rgba(128,128,128,0.26);transform:rotate(-15deg);">临时许可</div>
<div class="t" style="left:619.5px;top:758.5px;font-size:24px;line-height:28px;color:rgba(128,128,128,0.26);transform:rotate(-15deg);">临时许可</div>
<div class="t" style="left:1069.5px;top:758.5px;font-size:24px;line-height:28px;color:rgba(128,128,128,0.26);transform:rotate(-15deg);">临时许可</div>
<div class="t" style="left:1519.5px;top:758.5px;font-size:24px;line-height:28px;color:rgba(128,128,128,0.26);transform:rotate(-15deg);">临时许可</div>
<div class="t" style="left:169.5px;top:998.5px;font-size:24px;line-height:28px;color:rgba(128,128,128,0.26);transform:rotate(-15deg);">临时许可</div>
<div class="t" style="left:619.5px;top:998.5px;font-size:24px;line-height:28px;color:rgba(128,128,128,0.26);transform:rotate(-15deg);">临时许可</div>
<div class="t" style="left:1069.5px;top:998.5px;font-size:24px;line-height:28px;color:rgba(128,128,128,0.26);transform:rotate(-15deg);">临时许可</div>
<div class="t" style="left:1519.5px;top:998.5px;font-size:24px;line-height:28px;color:rgba(128,128,128,0.26);transform:rotate(-15deg);">临时许可</div>
</div>
<div class="r" style="left:551.0px;top:68.0px;width:217.0px;height:44.5px;background:#f2f4f9;"></div>
<div class="t" style="left:572.5px;top:81.0px;font-size:22px;line-height:22px;color:#3b7df5;font-weight:bold;letter-spacing:0.7px;">费用报销单-新增</div>
<svg class="r" style="left:747px;top:85px" width="16" height="16" viewBox="0 0 16 16"><path d="M2,2 L14,14 M14,2 L2,14" stroke="#a5a9b3" stroke-width="1.3"/></svg>
<div class="r" style="left:551.0px;top:109.0px;width:217.0px;height:3.0px;background:#3b7df5;"></div>
<div class="t" style="right:1753.0px;text-align:right;top:248.5px;font-size:18px;line-height:18px;color:#555a66;font-weight:normal;">单据编号</div>
<div class="r" style="left:181.0px;top:240.5px;width:253.5px;height:29.0px;background:#fff;border:1.5px solid #9ca5bb;border-radius:3px;"></div>
<div class="t" style="left:187.5px;top:248.0px;font-size:18px;line-height:18px;color:#a8a8a8;font-weight:normal;">保存时自动生成</div>
<div class="t" style="right:1753.0px;text-align:right;top:287.0px;font-size:18px;line-height:18px;color:#1f8bf2;font-weight:normal;">申请组织</div>
<div class="r" style="left:182.0px;top:279.0px;width:252.0px;height:28.0px;background:#e8eaef;border-radius:5px;"></div>
<div class="t" style="left:186.5px;top:284.5px;font-size:18px;line-height:18px;color:#3d424e;font-weight:normal;">张家港金数技术有限公司</div>
<div class="t" style="left:439.0px;top:283.0px;font-size:22px;line-height:22px;color:#f5141a;font-weight:normal;">*</div>
<div class="t" style="right:1753.0px;text-align:right;top:324.5px;font-size:18px;line-height:18px;color:#1f8bf2;font-weight:normal;">申请人</div>
<div class="r" style="left:182.0px;top:316.0px;width:252.0px;height:28.0px;background:#e8eaef;border-radius:5px;"></div>
<div class="t" style="left:186.5px;top:321.5px;font-size:18px;line-height:18px;color:#3d424e;font-weight:normal;">张晨晨</div>
<div class="t" style="left:439.0px;top:320.5px;font-size:22px;line-height:22px;color:#f5141a;font-weight:normal;">*</div>
<div class="t" style="right:1753.0px;text-align:right;top:362.5px;font-size:18px;line-height:18px;color:#1f8bf2;font-weight:normal;">申请部门</div>
<div class="r" style="left:182.0px;top:354.0px;width:252.0px;height:28.0px;background:#e8eaef;border-radius:5px;"></div>
<div class="t" style="left:186.5px;top:359.5px;font-size:18px;line-height:18px;color:#3d424e;font-weight:normal;">营销部</div>
<div class="t" style="left:439.0px;top:358.0px;font-size:22px;line-height:22px;color:#f5141a;font-weight:normal;">*</div>
<div class="t" style="right:1753.0px;text-align:right;top:399.5px;font-size:18px;line-height:18px;color:#555a66;font-weight:normal;">联系电话</div>
<div class="r" style="left:181.0px;top:390.0px;width:253.5px;height:29.5px;background:#fff;border:1.5px solid #9ca5bb;border-radius:3px;"></div>
<div class="t" style="right:1753.0px;text-align:right;top:437.0px;font-size:18px;line-height:18px;color:#555a66;font-weight:normal;">事由</div>
<div class="r" style="left:181.0px;top:428.0px;width:754.5px;height:60.5px;background:#fff;border:1.5px solid #9ca5bb;border-radius:3px;"></div>
<div class="t" style="left:184.5px;top:433.0px;font-size:18px;line-height:18px;color:#3d424e;font-weight:normal;">备用金</div>
<div class="t" style="left:940.0px;top:436.5px;font-size:22px;line-height:22px;color:#f5141a;font-weight:normal;">*</div>
<div class="t" style="right:1253.8px;text-align:right;top:248.5px;font-size:18px;line-height:18px;color:#555a66;font-weight:normal;">申请日期</div>
<div class="r" style="left:680.5px;top:240.5px;width:253.2px;height:29.0px;background:#fff;border:1.5px solid #9ca5bb;border-radius:3px;"></div>
<div class="t" style="left:687.5px;top:246.0px;font-size:20px;line-height:20px;color:#3d424e;font-weight:normal;letter-spacing:-0.5px;">2026-01-12</div>
<div class="t" style="left:938.5px;top:245.0px;font-size:22px;line-height:22px;color:#f5141a;font-weight:normal;">*</div>
<svg class="r" style="left:890px;top:238px" width="40" height="30" viewBox="0 0 40 30"><g fill="#aebfdc"><path d="M14.1,8.1 h23.8 v19.8 h-23.8 Z M15.6,9.6 v3.2 h20.8 v-3.2 Z" fill-rule="evenodd"/><rect x="14.1" y="12.6" width="23.8" height="15.3"/><rect x="19.9" y="6.6" width="1.7" height="5"/><rect x="30.4" y="6.6" width="1.7" height="5"/><rect x="23.5" y="8.6" width="5" height="1.6"/></g><g fill="#fff"><rect x="18.3" y="15.8" width="3.3" height="3.2"/><rect x="24.3" y="15.8" width="3.3" height="3.2"/><rect x="30.3" y="15.8" width="3.3" height="3.2"/><rect x="18.3" y="21.6" width="3.3" height="3.2"/><rect x="24.3" y="21.6" width="3.3" height="3.2"/><rect x="30.3" y="21.6" width="3.3" height="3.2"/></g></svg>
<div class="t" style="right:1253.8px;text-align:right;top:287.0px;font-size:18px;line-height:18px;color:#1f8bf2;font-weight:normal;">费用承担组织</div>
<div class="r" style="left:680.5px;top:278.0px;width:253.2px;height:29.5px;background:#fff;border:1.5px solid #9ca5bb;border-radius:3px;"></div>
<div class="t" style="left:686.5px;top:284.0px;font-size:18px;line-height:18px;color:#3d424e;font-weight:normal;">张家港金数技术有限公司</div>
<div class="t" style="left:938.5px;top:283.0px;font-size:22px;line-height:22px;color:#f5141a;font-weight:normal;">*</div>
<svg class="r" style="left:900px;top:279px" width="28" height="26" viewBox="0 0 28 26"><circle cx="12.5" cy="11.5" r="8.6" fill="none" stroke="#b3c1dc" stroke-width="2.6"/><line x1="18.8" y1="17.8" x2="23.5" y2="22.5" stroke="#b3c1dc" stroke-width="3" stroke-linecap="round"/></svg>
<div class="t" style="right:1253.8px;text-align:right;top:324.5px;font-size:18px;line-height:18px;color:#1f8bf2;font-weight:normal;">费用承担部门</div>
<div class="r" style="left:680.5px;top:315.5px;width:253.2px;height:29.0px;background:#fff;border:1.5px solid #9ca5bb;border-radius:3px;"></div>
<div class="t" style="left:686.5px;top:321.0px;font-size:18px;line-height:18px;color:#3d424e;font-weight:normal;">开发部</div>
<div class="t" style="left:938.5px;top:320.5px;font-size:22px;line-height:22px;color:#f5141a;font-weight:normal;">*</div>
<svg class="r" style="left:900px;top:316.5px" width="28" height="26" viewBox="0 0 28 26"><circle cx="12.5" cy="11.5" r="8.6" fill="none" stroke="#b3c1dc" stroke-width="2.6"/><line x1="18.8" y1="17.8" x2="23.5" y2="22.5" stroke="#b3c1dc" stroke-width="3" stroke-linecap="round"/></svg>
<div class="t" style="right:1253.8px;text-align:right;top:362.5px;font-size:18px;line-height:18px;color:#555a66;font-weight:normal;">往来单位类型</div>
<div class="r" style="left:681.0px;top:354.0px;width:251.5px;height:28.0px;background:#e8eaef;border-radius:5px;"></div>
<div class="t" style="left:687.5px;top:359.0px;font-size:18px;line-height:18px;color:#3d424e;font-weight:normal;">员工</div>
<div class="t" style="left:938.5px;top:358.0px;font-size:22px;line-height:22px;color:#f5141a;font-weight:normal;">*</div>
<svg class="r" style="left:906px;top:360px" width="17" height="12" viewBox="0 0 17 12"><polyline points="2.6,3.3 9,9.5 15.3,3.3" fill="none" stroke="#a3a7b0" stroke-width="2"/></svg>
<div class="t" style="right:1253.8px;text-align:right;top:399.5px;font-size:18px;line-height:18px;color:#1f8bf2;font-weight:normal;">往来单位</div>
<div class="r" style="left:681.0px;top:391.0px;width:251.5px;height:27.7px;background:#e8eaef;border-radius:5px;"></div>
<div class="t" style="left:686.5px;top:396.0px;font-size:18px;line-height:18px;color:#3d424e;font-weight:normal;">张晨晨</div>
<div class="t" style="left:938.5px;top:395.0px;font-size:22px;line-height:22px;color:#f5141a;font-weight:normal;">*</div>
<div class="t" style="right:707.5px;text-align:right;top:249.0px;font-size:18px;line-height:18px;color:#555a66;font-weight:normal;">可用借款余额</div>
<div class="r" style="left:1227.0px;top:241.5px;width:251.6px;height:27.5px;background:#e8eaef;border-radius:5px;"></div>
<div class="t" style="right:458.0px;text-align:right;top:245.0px;font-size:20px;line-height:20px;color:#3d424e;font-weight:normal;letter-spacing:-0.8px;">¥2,000.00</div>
<div class="t" style="right:707.5px;text-align:right;top:287.0px;font-size:18px;line-height:18px;color:#1f8bf2;font-weight:normal;">币别</div>
<div class="r" style="left:1227.0px;top:279.0px;width:251.6px;height:27.3px;background:#e8eaef;border-radius:5px;"></div>
<div class="t" style="left:1232.5px;top:284.0px;font-size:18px;line-height:18px;color:#3d424e;font-weight:normal;">人民币</div>
<div class="t" style="left:1485.0px;top:283.0px;font-size:22px;line-height:22px;color:#f5141a;font-weight:normal;">*</div>
<div class="r" style="left:1222.0px;top:318.0px;width:23.0px;height:23.0px;background:#eef0f4;border:1px solid #cfd3db;border-radius:4px;"></div>
<div class="t" style="left:1252.8px;top:321.5px;font-size:18px;line-height:18px;color:#3d424e;font-weight:normal;">费用外部承担</div>
<div class="t" style="right:707.5px;text-align:right;top:358.5px;font-size:18px;line-height:18px;color:#555a66;font-weight:normal;">外部往来单位类型</div>
<div class="r" style="left:1227.0px;top:351.0px;width:253.8px;height:27.6px;background:#e8eaef;border-radius:5px;"></div>
<svg class="r" style="left:1452px;top:356px" width="19" height="14" viewBox="0 0 19 14"><polyline points="3,3.5 10,10 17,3.5" fill="none" stroke="#9aa0ae" stroke-width="1.8"/></svg>
<div class="t" style="right:707.5px;text-align:right;top:396.0px;font-size:18px;line-height:18px;color:#1f8bf2;font-weight:normal;">外部往来单位</div>
<div class="r" style="left:1227.0px;top:388.0px;width:251.6px;height:28.0px;background:#e8eaef;border-radius:5px;"></div>
<div class="r" style="left:39.8px;top:497.0px;width:313.7px;height:65.8px;border:4px solid #f63636;border-radius:7px;"></div>
<div class="r" style="left:60.7px;top:518.0px;width:23.0px;height:23.0px;background:#fff;border:1px solid #cdd1da;border-radius:4px;"></div>
<div class="t" style="left:92.7px;top:521.7px;font-size:18px;line-height:18px;color:#454b58;font-weight:normal;">申请付款</div>
<div class="r" style="left:214.5px;top:519.0px;width:23.0px;height:23.0px;background:#fff;border:1px solid #cdd1da;border-radius:4px;"></div>
<div class="t" style="left:247.6px;top:522.5px;font-size:18px;line-height:18px;color:#454b58;font-weight:normal;">申请退款</div>
<div class="r" style="left:373.0px;top:518.5px;width:23.0px;height:23.0px;background:#e9ebf0;border:1px solid #cdd1da;border-radius:4px;"></div>
<div class="t" style="left:404.0px;top:522.0px;font-size:18px;line-height:18px;color:#454b58;font-weight:normal;">实报实付</div>
<div class="r" style="left:676.0px;top:520.5px;width:23.0px;height:23.0px;background:#fff;border:1px solid #cdd1da;border-radius:4px;"></div>
<div class="t" style="left:707.0px;top:524.5px;font-size:18px;line-height:18px;color:#454b58;font-weight:normal;">钉钉审批</div>
</body></html>
